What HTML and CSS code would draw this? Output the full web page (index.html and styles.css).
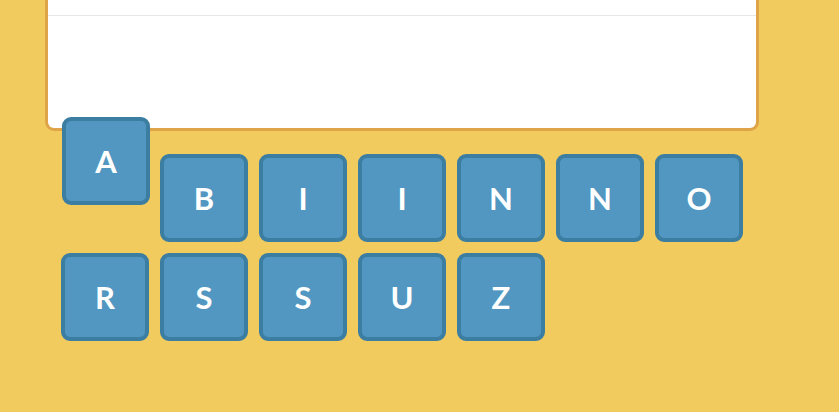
FILE: index.html
```html
<!DOCTYPE html>
<html>
<head>
<meta charset="utf-8">
<link rel="stylesheet" href="styles.css">
</head>
<body>
<div class="card">
  <div class="card-head"></div>
  <div class="card-body"></div>
</div>
<div class="tiles">
  <div class="tile lifted">A</div>
  <div class="tile">B</div>
  <div class="tile">I</div>
  <div class="tile">I</div>
  <div class="tile">N</div>
  <div class="tile">N</div>
  <div class="tile">O</div>
  <div class="tile">R</div>
  <div class="tile">S</div>
  <div class="tile">S</div>
  <div class="tile">U</div>
  <div class="tile">Z</div>
</div>
</body>
</html>
```
FILE: styles.css
```css
html, body {
  margin: 0;
  padding: 0;
}
body {
  background: #f1cb5e;
  width: 839px;
  height: 412px;
  overflow: hidden;
  font-family: Lato, "Open Sans", sans-serif;
}
.card {
  margin-left: 45px;
  width: 708px;
  background: #fff;
  border: 3px solid #dfa447;
  border-top: none;
  border-radius: 0 0 9px 9px;
}
.card-head {
  height: 15px;
  border-bottom: 1px solid #e6e6e6;
}
.card-body {
  height: 112px;
}
.tiles {
  display: grid;
  grid-template-columns: repeat(7, 88px);
  grid-auto-rows: 88px;
  gap: 11px;
  padding-left: 61px;
  margin-top: 23px;
}
.tile {
  box-sizing: border-box;
  background: #5197c1;
  border: 4px solid #3c7da2;
  border-radius: 9px;
  color: #fff;
  font-weight: 700;
  font-size: 31px;
  display: flex;
  align-items: center;
  justify-content: center;
}
.tile.lifted {
  transform: translate(1px, -37px);
}
```
